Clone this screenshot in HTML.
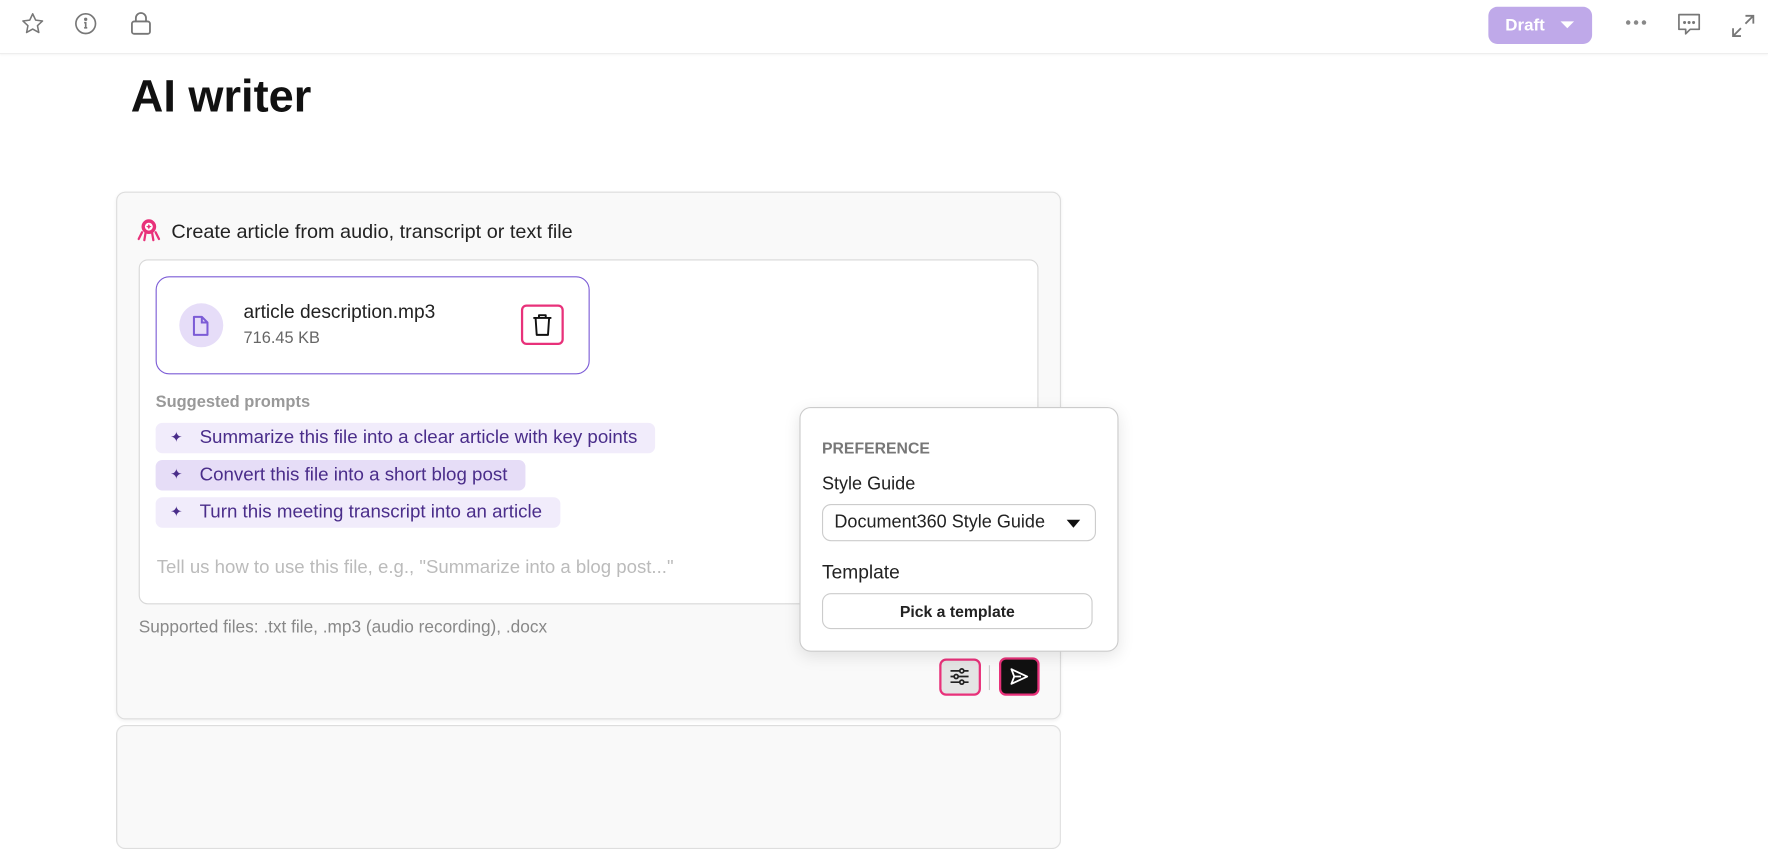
<!DOCTYPE html>
<html><head><style>
*{box-sizing:border-box;margin:0;padding:0}
body{width:1768px;height:741px;overflow:hidden;background:#fff;font-family:"Liberation Sans",sans-serif;color:#222}
#w{position:absolute;left:0;top:0;width:1568px;height:658px;transform:scale(1.12755);transform-origin:0 0}
.a{position:absolute}
.c{font-size:16.6px;color:#4a2d8a;line-height:18px;white-space:nowrap}
.s{font-size:13px;color:#4a2d8a}
</style></head><body><div id="w">
<div class="a" style="left:0;top:0;width:1568px;height:48px;border-bottom:1px solid #eee;box-shadow:0 1px 2px rgba(0,0,0,.04)"></div>
<svg class="a" style="left:18px;top:10px" width="22" height="22" viewBox="0 0 24 24" fill="none" stroke="#777" stroke-width="1.5"><path d="M12 2.5l2.9 6.1 6.6.8-4.9 4.5 1.3 6.6L12 17.2l-5.9 3.3 1.3-6.6-4.9-4.5 6.6-.8z" stroke-linejoin="round"/></svg>
<svg class="a" style="left:65px;top:10px" width="22" height="22" viewBox="0 0 24 24" fill="none" stroke="#777" stroke-width="1.6"><circle cx="12" cy="12" r="9.5"/><path d="M10.5 11h1.5v5M10.5 16h3"/><circle cx="12" cy="7.8" r=".8" fill="#777"/></svg>
<svg class="a" style="left:114px;top:9px" width="22" height="24" viewBox="0 0 22 24" fill="none" stroke="#777" stroke-width="1.6"><rect x="3" y="10" width="16" height="11" rx="2"/><path d="M6.5 10V7a4.5 4.5 0 0 1 9 0v3"/></svg>
<div class="a" style="left:1320px;top:6px;width:92px;height:33px;background:#bfa9e9;border-radius:8px;color:#fff;font-size:15px;font-weight:bold;line-height:33px;padding-left:15px">Draft<span style="display:inline-block;margin-left:14px;width:0;height:0;border-left:6px solid transparent;border-right:6px solid transparent;border-top:6px solid #fff;vertical-align:2px"></span></div>
<svg class="a" style="left:1441px;top:17px" width="20" height="6" viewBox="0 0 20 6" fill="#888"><circle cx="3" cy="3" r="2"/><circle cx="10" cy="3" r="2"/><circle cx="17" cy="3" r="2"/></svg>
<svg class="a" style="left:1487px;top:11px" width="22" height="22" viewBox="0 0 22 22" fill="none" stroke="#777" stroke-width="1.5"><path d="M2 2h18v13H12l-4 4v-4H2z" stroke-linejoin="round"/><circle cx="7" cy="9" r=".6" fill="#777"/><circle cx="11" cy="9" r=".6" fill="#777"/><circle cx="15" cy="9" r=".6" fill="#777"/></svg>
<svg class="a" style="left:1535px;top:12px" width="22" height="22" viewBox="0 0 22 22" fill="none" stroke="#777" stroke-width="1.6"><path d="M13 2h7v7M20 2l-7 7M9 20H2v-7M2 20l7-7"/></svg>
<div class="a" style="left:116px;top:64px;font-size:40px;font-weight:bold;color:#111">AI writer</div>

<div class="a" style="left:103px;top:170px;width:838px;height:468px;background:#f9f9f9;border:1px solid #ddd;border-radius:8px;box-shadow:0 1px 3px rgba(0,0,0,.06)"></div>
<div class="a" style="left:103px;top:643px;width:838px;height:110px;background:#f9f9f9;border:1px solid #ddd;border-radius:8px"></div>
<svg class="a" style="left:121px;top:193px" width="22" height="22" viewBox="0 0 22 22"><circle cx="11" cy="8" r="6.5" fill="#e8317a"/><circle cx="11" cy="8" r="3.5" fill="#fff"/><path d="M11 5.5l.8 1.7 1.7.8-1.7.8-.8 1.7-.8-1.7L8.5 8l1.7-.8z" fill="#e8317a"/><path d="M5 13l-3 6M8 14l-1 6M14 14l1 6M17 13l3 6" stroke="#e8317a" stroke-width="2" stroke-linecap="round"/></svg>
<div class="a" style="left:152px;top:195px;font-size:17.6px;color:#222;white-space:nowrap">Create article from audio, transcript or text file</div>

<div class="a" style="left:123px;top:230px;width:798px;height:306px;background:#fff;border:1px solid #d8d8d8;border-radius:8px"></div>
<div class="a" style="left:138px;top:245px;width:385px;height:87px;border:1px solid #7c5cd6;border-radius:12px;background:#fff"></div>
<div class="a" style="left:159px;top:269px;width:39px;height:39px;border-radius:50%;background:#e6ddf8"></div>
<svg class="a" style="left:170px;top:279px" width="16" height="20" viewBox="0 0 16 20" fill="none" stroke="#7c5cd6" stroke-width="1.8"><path d="M2 2h7l5 5v11H2z" stroke-linejoin="round"/><path d="M9 2v5h5"/></svg>
<div class="a" style="left:216px;top:267px;font-size:17px;color:#222">article description.mp3</div>
<div class="a" style="left:216px;top:292px;font-size:14.5px;color:#666">716.45 KB</div>
<div class="a" style="left:462px;top:270px;width:38px;height:36px;border:2.5px solid #e8317a;border-radius:5px"></div>
<svg class="a" style="left:471px;top:277px" width="20" height="22" viewBox="0 0 20 22" fill="none" stroke="#111" stroke-width="1.7"><path d="M2 5h16M7 5V2.5h6V5M4 5l1 15h10l1-15" stroke-linejoin="round"/></svg>
<div class="a" style="left:138px;top:349px;font-size:14.6px;font-weight:bold;color:#999">Suggested prompts</div>
<div class="a" style="left:138px;top:375px;width:443px;height:27px;background:#f1ecfb;border-radius:6px"></div>
<div class="a" style="left:138px;top:408px;width:328px;height:27px;background:#e6ddf7;border-radius:6px"></div>
<div class="a" style="left:138px;top:441px;width:359px;height:27px;background:#f1ecfb;border-radius:6px"></div>
<div class="a s" style="left:151px;top:380px">✦</div><div class="a c" style="left:177px;top:379px">Summarize this file into a clear article with key points</div>
<div class="a s" style="left:151px;top:413px">✦</div><div class="a c" style="left:177px;top:412px">Convert this file into a short blog post</div>
<div class="a s" style="left:151px;top:446px">✦</div><div class="a c" style="left:177px;top:445px">Turn this meeting transcript into an article</div>
<div class="a" style="left:139px;top:494px;font-size:16.5px;color:#bbb;white-space:nowrap">Tell us how to use this file, e.g., "Summarize into a blog post..."</div>
<div class="a" style="left:123px;top:548px;font-size:15.3px;color:#888;white-space:nowrap">Supported files: .txt file, .mp3 (audio recording), .docx</div>

<div class="a" style="left:833px;top:584px;width:37px;height:33px;border:2.5px solid #e8317a;border-radius:6px;background:#e4e4e4"></div>
<svg class="a" style="left:842px;top:592px" width="18" height="16" viewBox="0 0 18 16" fill="none" stroke="#222" stroke-width="1.5"><path d="M1 3h16M1 8h16M1 13h16"/><circle cx="11" cy="3" r="1.8" fill="#e4e4e4"/><circle cx="6" cy="8" r="1.8" fill="#e4e4e4"/><circle cx="11" cy="13" r="1.8" fill="#e4e4e4"/></svg>
<div class="a" style="left:877px;top:590px;width:1px;height:22px;background:#ccc"></div>
<div class="a" style="left:886px;top:583px;width:36px;height:34px;border:2.5px solid #e8317a;border-radius:6px;background:#111"></div>
<svg class="a" style="left:895px;top:592px" width="18" height="16" viewBox="0 0 18 16" fill="none" stroke="#fff" stroke-width="1.6"><path d="M2 1.5l14 6.5-14 6.5 2.5-6.5z M4.5 8h6" stroke-linejoin="round"/></svg>

<div class="a" style="left:709px;top:361px;width:283px;height:217px;background:#fff;border:1px solid #ccc;border-radius:10px;box-shadow:0 4px 14px rgba(0,0,0,.1)"></div>
<div class="a" style="left:729px;top:389px;font-size:14px;font-weight:bold;color:#777">PREFERENCE</div>
<div class="a" style="left:729px;top:421px;font-size:16px;color:#222">Style Guide</div>
<div class="a" style="left:729px;top:447px;width:243px;height:33px;border:1px solid #ccc;border-radius:8px;font-size:16px;line-height:31px;padding-left:10px;color:#222">Document360 Style Guide<span style="position:absolute;right:13px;top:13px;width:0;height:0;border-left:6px solid transparent;border-right:6px solid transparent;border-top:7px solid #111"></span></div>
<div class="a" style="left:729px;top:498px;font-size:17px;color:#222">Template</div>
<div class="a" style="left:729px;top:526px;width:240px;height:32px;border:1px solid #ccc;border-radius:8px;font-size:14px;font-weight:bold;line-height:30px;text-align:center;color:#222">Pick a template</div>
</div></body></html>
